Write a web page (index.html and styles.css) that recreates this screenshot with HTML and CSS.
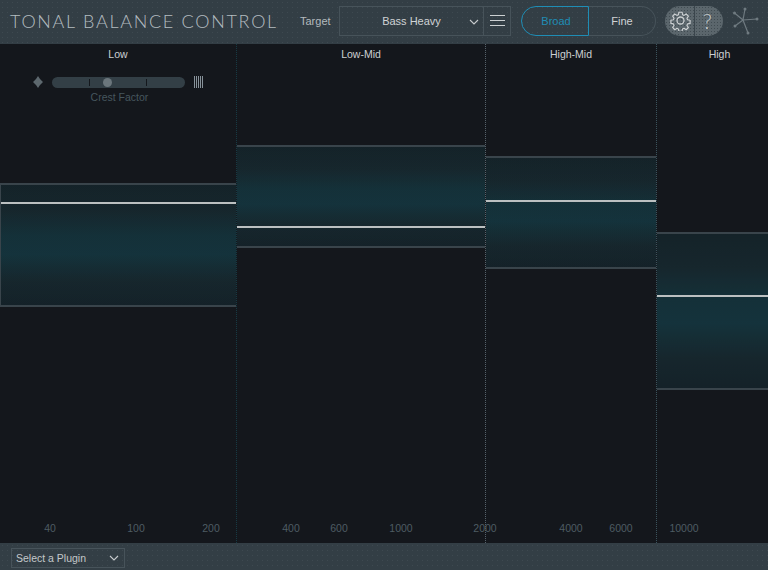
FILE: index.html
```html
<!DOCTYPE html>
<html lang="en">
<head>
    <meta charset="UTF-8">
    <meta name="viewport" content="width=device-width, initial-scale=1.0">
    <title>Tonal Balance Control</title>
    <link rel="stylesheet" href="styles.css">
</head>
<body>
    <header class="topbar">
        <div class="title">TONAL BALANCE CONTROL</div>
        <div class="target-label">Target</div>
        <div class="target-select">
            <div class="target-name">
                <span>Bass Heavy</span>
                <svg class="chevron" width="10" height="6" viewBox="0 0 10 6"><path d="M1 1l4 4 4-4" fill="none" stroke="#c8ccce" stroke-width="1.1"/></svg>
            </div>
            <div class="target-menu"><i></i><i></i><i></i></div>
        </div>
        <div class="width-toggle">
            <div class="toggle-btn toggle-on">Broad</div>
            <div class="toggle-btn">Fine</div>
        </div>
        <div class="tools">
            <div class="tool tool-gear">
                <svg width="21" height="21" viewBox="0 0 24 24" fill="none" stroke="#ccd0d2" stroke-width="1.5" stroke-linejoin="round">
                    <path d="M10 1.5h4l.6 3.2 1.9.8 2.7-1.8 2.8 2.8-1.8 2.7.8 1.9 3.2.6v4l-3.2.6-.8 1.9 1.8 2.7-2.8 2.8-2.7-1.8-1.9.8-.6 3.2h-4l-.6-3.2-1.9-.8-2.7 1.8-2.8-2.8 1.8-2.7-.8-1.9-3.2-.6v-4l3.2-.6.8-1.9-1.8-2.7 2.8-2.8 2.7 1.8 1.9-.8z" transform="translate(1.2 1.2) scale(.9)"/>
                    <circle cx="12" cy="12" r="4"/>
                </svg>
            </div>
            <div class="tool tool-help">?</div>
        </div>
        <svg class="nodes" width="26" height="28" viewBox="0 0 26 28" fill="none" stroke="#6f7a80" stroke-width="1.2">
            <path d="M10 13L12 2M10 13L1.500 6M10 13L2 19M10 13L24 12M10 13L15 26"/>
            <g fill="#6f7a80" stroke="none">
                <circle cx="12" cy="2" r="1.500"/><circle cx="1.500" cy="6" r="1.500"/><circle cx="2" cy="19" r="1.500"/>
                <circle cx="24" cy="12" r="1.500"/><circle cx="15" cy="26" r="1.500"/>
            </g>
        </svg>
    </header>

    <main class="plot">
        <section class="band-col col-low">
            <div class="col-head">
                <div class="col-label">Low</div>
                <div class="crest">
                    <div class="crest-row">
                        <svg width="10" height="12" viewBox="0 0 10 12"><path d="M5 0l2 3 3 3-3 3-2 3-2-3-3-3 3-3z" fill="#5d686e"/></svg>
                        <div class="crest-track">
                            <i class="crest-tick tick-a"></i>
                            <i class="crest-knob"></i>
                            <i class="crest-tick tick-b"></i>
                        </div>
                        <div class="crest-bars"></div>
                    </div>
                    <div class="crest-label">Crest Factor</div>
                </div>
            </div>
            <div class="band band-low"><div class="level level-low"></div></div>
        </section>
        <section class="band-col col-lowmid">
            <div class="col-head"><div class="col-label">Low-Mid</div></div>
            <div class="band band-lowmid"><div class="level level-lowmid"></div></div>
        </section>
        <section class="band-col col-highmid">
            <div class="col-head"><div class="col-label">High-Mid</div></div>
            <div class="band band-highmid"><div class="level level-highmid"></div></div>
        </section>
        <section class="band-col col-high">
            <div class="col-head"><div class="col-label">High</div></div>
            <div class="band band-high"><div class="level level-high"></div></div>
        </section>

        <div class="axis">
            <span style="left: 50px">40</span>
            <span style="left: 136px">100</span>
            <span style="left: 211px">200</span>
            <span style="left: 291px">400</span>
            <span style="left: 339px">600</span>
            <span style="left: 401px">1000</span>
            <span style="left: 485px">2000</span>
            <span style="left: 571px">4000</span>
            <span style="left: 621px">6000</span>
            <span style="left: 684px">10000</span>
        </div>
    </main>

    <footer class="bottombar">
        <div class="plugin-select">
            <span>Select a Plugin</span>
            <svg width="10" height="6" viewBox="0 0 10 6"><path d="M1 1l4 4 4-4" fill="none" stroke="#c8ccce" stroke-width="1.1"/></svg>
        </div>
    </footer>
</body>
</html>
```

FILE: styles.css
```css
* {
    box-sizing: border-box;
}

html, body {
    margin: 0;
    padding: 0;
    height: 100%;
}

body {
    display: flex;
    flex-direction: column;
    height: 570px;
    overflow: hidden;
    background-color: #14171c;
    color: #d4d7d9;
    font-family: "Liberation Sans", Arial, sans-serif;
    font-size: 11px;
}

/* top and bottom bars share the dotted panel texture */
.topbar, .bottombar {
    background-color: #333e45;
    background-image: radial-gradient(rgba(120, 135, 142, 0.16) 0.5px, transparent 0.8px);
    background-size: 5px 5px;
}

.topbar {
    display: flex;
    align-items: center;
    height: 44px;
    flex: none;
    padding: 0 0 3px 10px;
}

.title {
    width: 290px;
    font-family: Lato, sans-serif;
    font-weight: 300;
    font-size: 18px;
    letter-spacing: 1.700px;
    color: #b4bcc0;
    white-space: nowrap;
}

.target-label {
    width: 39px;
    font-size: 11px;
    color: #b4babd;
}

.target-select {
    display: flex;
    width: 172px;
    height: 30px;
    border: 1px solid #47535a;
}

.target-name {
    flex: 1;
    display: flex;
    align-items: center;
    justify-content: center;
    position: relative;
    border-right: 1px solid #47535a;
    color: #d0d3d5;
}

.chevron {
    position: absolute;
    right: 4px;
    top: 12px;
}

.target-menu {
    width: 26px;
    display: flex;
    flex-direction: column;
    justify-content: center;
    align-items: center;
    gap: 4px;
}

.target-menu i {
    display: block;
    width: 15px;
    height: 1px;
    background-color: #ccd0d2;
}

.width-toggle {
    display: flex;
    width: 135px;
    height: 30px;
    margin-left: 10px;
}

.toggle-btn {
    flex: 1;
    display: flex;
    align-items: center;
    justify-content: center;
    border: 1px solid #47535a;
    border-left: 0;
    border-radius: 0 15px 15px 0;
    color: #d0d3d5;
}

.toggle-on {
    flex: none;
    width: 68px;
    padding-left: 2px;
    border: 1px solid #1f8db5;
    border-radius: 15px 0 0 15px;
    color: #1f8db5;
}

.tools {
    display: flex;
    width: 58px;
    height: 30px;
    margin-left: 9px;
    border-radius: 15px;
    overflow: hidden;
    background-color: #5b666c;
    background-image: radial-gradient(rgba(40, 50, 56, 0.5) 0.5px, transparent 0.8px);
    background-size: 3px 3px;
}

.tool {
    flex: 1;
    display: flex;
    align-items: center;
    justify-content: center;
}

.tool-gear {
    padding-left: 3px;
    border-right: 1px solid #3a454c;
}

.tool-help {
    padding-right: 3px;
    font-family: Lato, sans-serif;
    font-weight: 300;
    font-size: 21px;
    color: #c4c9cb;
}

.nodes {
    margin-left: 10px;
}

.plot {
    position: relative;
    flex: 1;
    display: flex;
}

.band-col {
    display: flex;
    flex-direction: column;
    border-left: 1px dotted #2a3a42;
}

.col-low {
    width: 236px;
    border-left: 0;
}

.col-lowmid {
    width: 249px;
    border-left-color: #173a44;
}

.col-highmid {
    width: 171px;
    border-left-color: #56626a;
}

.col-high {
    width: 112px;
    border-left-color: #3b535d;
}

.col-head {
    height: 60px;
    flex: none;
}

.col-label {
    padding-top: 4px;
    text-align: center;
    color: #ccd0d2;
    font-size: 10.500px;
}

.col-high .col-label {
    padding-left: 14px;
}

.crest {
    margin-top: 16px;
}

.crest-row {
    display: flex;
    align-items: center;
    justify-content: center;
    gap: 9px;
    height: 12px;
    padding-left: 1px;
}

.crest-track {
    position: relative;
    width: 133px;
    height: 11px;
    border-radius: 6px;
    background-color: #333f46;
}

.crest-tick {
    position: absolute;
    top: 2px;
    width: 1px;
    height: 7px;
    background-color: #14171c;
}

.tick-a {
    left: 37px;
}

.tick-b {
    left: 94px;
}

.crest-knob {
    position: absolute;
    left: 51px;
    top: 1px;
    width: 9px;
    height: 9px;
    border-radius: 50%;
    background-color: #6b767c;
}

.crest-bars {
    width: 10px;
    height: 12px;
    background-image: repeating-linear-gradient(90deg, #87929a 0 1px, transparent 1px 2px);
}

.crest-label {
    margin-top: 3px;
    padding-left: 3px;
    text-align: center;
    font-size: 10.500px;
    color: #46565e;
}

.band {
    position: relative;
    border-top: 2px solid #39444b;
    border-bottom: 2px solid #39444b;
    background-image:
        radial-gradient(rgba(20, 23, 28, 0.22) 0.5px, transparent 0.8px),
        linear-gradient(180deg, #14232a 0%, #16282e 22%, #14323b 42%, #14343e 58%, #16282e 80%, #14222a 100%);
    background-size: 2px 2px, auto;
}

.band-low {
    height: 124px;
    margin-top: 79px;
    border-left: 1px solid #39444b;
}

.band-lowmid {
    height: 103px;
    margin-top: 41px;
}

.band-highmid {
    height: 113px;
    margin-top: 52px;
}

.band-high {
    height: 158px;
    margin-top: 128px;
}

.level {
    position: absolute;
    left: 0;
    right: 0;
    height: 2px;
    background-color: #bcc0c1;
}

.level-low {
    top: 17px;
}

.level-lowmid {
    top: 79px;
}

.level-highmid {
    top: 42px;
}

.level-high {
    top: 61px;
}

.axis {
    position: absolute;
    left: 0;
    right: 0;
    bottom: 7px;
    height: 14px;
}

.axis span {
    position: absolute;
    transform: translateX(-50%);
    font-size: 10.500px;
    color: #4e5c63;
}

.bottombar {
    display: flex;
    align-items: center;
    height: 27px;
    flex: none;
    padding: 2px 0 0 11px;
}

.plugin-select {
    display: flex;
    align-items: center;
    justify-content: space-between;
    width: 114px;
    height: 20px;
    padding: 0 5px 0 4px;
    border: 1px solid #47535a;
    color: #c4c8ca;
    font-size: 10.500px;
}
```
